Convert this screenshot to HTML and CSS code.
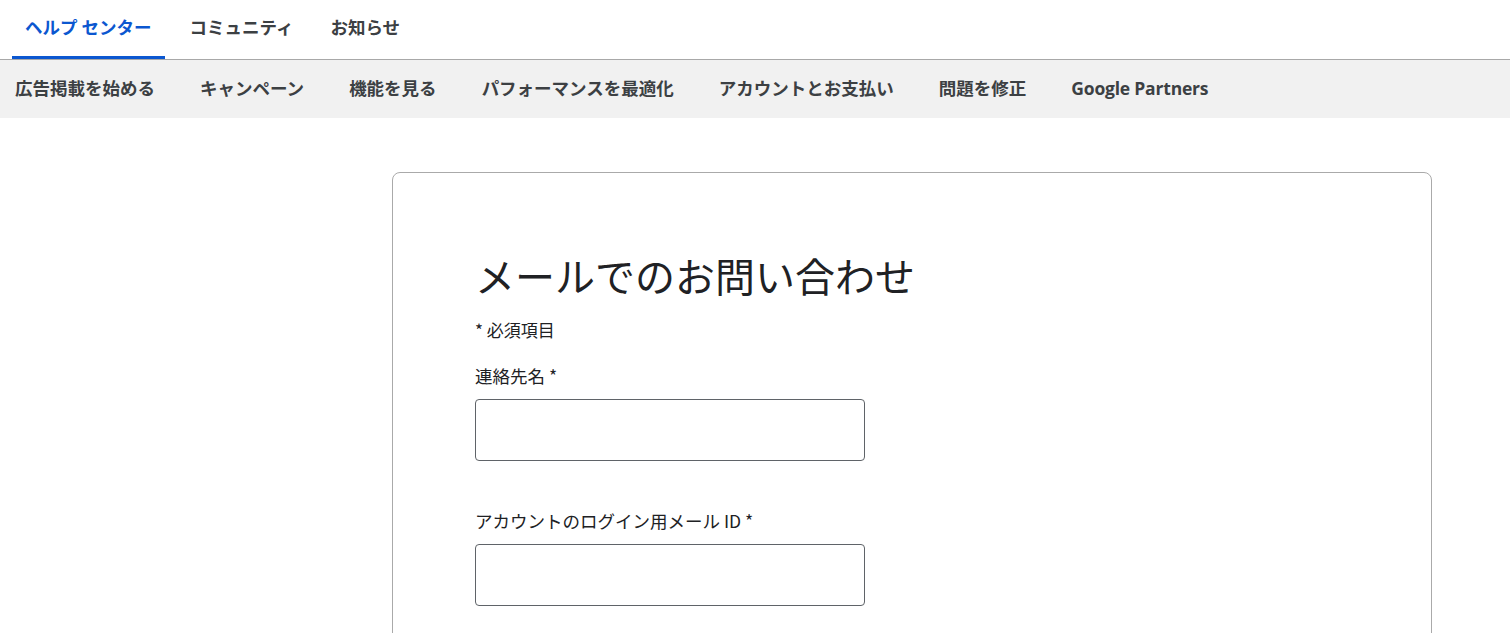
FILE: index.html
```html
<!DOCTYPE html>
<html lang="ja">
<head>
  <meta charset="UTF-8" />
  <meta name="viewport" content="width=device-width, initial-scale=1.0" />
  <title>メールでのお問い合わせ – ヘルプ センター</title>
  <link rel="stylesheet" href="styles.css">
</head>
<body>
  <header class="topbar">
    <nav class="tabs">
      <a class="tab active" href="#">ヘルプ センター</a>
      <a class="tab" href="#">コミュニティ</a>
      <a class="tab" href="#">お知らせ</a>
    </nav>
  </header>

  <nav class="subnav">
    <a href="#">広告掲載を始める</a>
    <a href="#">キャンペーン</a>
    <a href="#">機能を見る</a>
    <a href="#">パフォーマンスを最適化</a>
    <a href="#">アカウントとお支払い</a>
    <a href="#">問題を修正</a>
    <a href="#" class="latin">Google Partners</a>
  </nav>

  <main class="main">
    <div class="card">
      <h1>メールでのお問い合わせ</h1>
      <p class="required">* 必須項目</p>

      <form class="form">
        <div class="field">
          <label for="name">連絡先名 *</label>
          <input id="name" type="text" />
        </div>
        <div class="field">
          <label for="email">アカウントのログイン用メール ID *</label>
          <input id="email" type="email" />
        </div>
      </form>
    </div>
  </main>
</body>
</html>
```

FILE: styles.css
```css
* { margin: 0; padding: 0; box-sizing: border-box; }
body {
  font-family: "Noto Sans CJK JP", "Noto Sans", sans-serif;
  background: #fff;
  color: #202124;
  overflow: hidden;
}
a { text-decoration: none; }

/* top tabs */
.topbar {
  height: 60px;
  border-bottom: 1px solid #a8a8a8;
}
.tabs {
  display: flex;
  gap: 11px;
  height: 59px;
  padding-left: 12px;
}
.tab {
  display: flex;
  align-items: center;
  padding: 0 13px 4px;
  font-size: 17.5px;
  font-weight: bold;
  color: #3c4043;
  border-bottom: 3px solid transparent;
}
.tab.active {
  padding-right: 14px;
  color: #0b57d0;
  border-bottom-color: #0b57d0;
  border-radius: 3px 3px 0 0;
}

/* second bar */
.subnav {
  display: flex;
  align-items: center;
  gap: 45px;
  height: 58px;
  padding: 0 0 3px 15px;
  background: #f1f1f1;
}
.subnav a {
  font-size: 17.5px;
  font-weight: bold;
  color: #3c4043;
}
.subnav .latin { font-family: "Open Sans", "Noto Sans", sans-serif; letter-spacing: -0.2px; }

/* content */
.main {
  padding: 54px 0 0 392px;
}
.card {
  width: 1040px;
  min-height: 600px;
  border: 1px solid #aaa;
  border-radius: 8px;
  padding: 78px 82px;
}
.card h1 {
  font-size: 40px;
  font-weight: normal;
  line-height: 48px;
  color: #202124;
}
.required {
  margin-top: 21px;
  font-size: 17px;
  line-height: 20px;
}
.form { margin-top: 24px; }
.field { display: flex; flex-direction: column; align-items: flex-start; }
.field + .field { margin-top: 48px; }
.field label {
  font-size: 17.5px;
  line-height: 24px;
}
.field input {
  margin-top: 11px;
  width: 390px;
  height: 62px;
  border: 1px solid #5f6368;
  border-radius: 4px;
  font: inherit;
  padding: 0 12px;
}
```
